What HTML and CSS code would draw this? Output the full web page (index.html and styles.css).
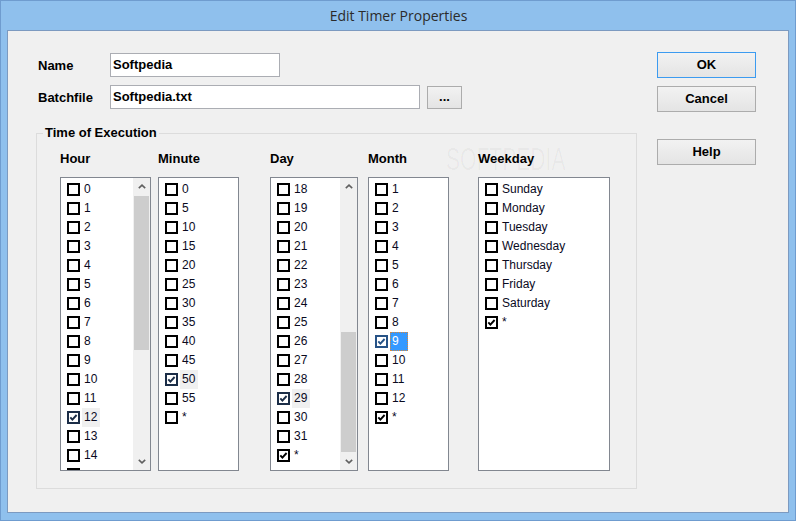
FILE: index.html
```html
<!DOCTYPE html>
<html>
<head>
<meta charset="utf-8">
<title>Edit Timer Properties</title>
<link rel="stylesheet" href="styles.css">
</head>
<body>
<div class="window">
  <div class="titlebar">Edit Timer Properties</div>
  <div class="client">
    <div class="watermark"><span class="wm-big">SOFTPEDIA</span><span class="wm-tm">™</span><span class="wm-url">www.softpedia.com</span></div>
    <div class="main">
      <div class="row">
        <label class="lbl">Name</label>
        <div class="input w-name">Softpedia</div>
      </div>
      <div class="row row-batch">
        <label class="lbl">Batchfile</label>
        <div class="input w-batch">Softpedia.txt</div>
        <div class="btn btn-browse">...</div>
      </div>
      <div class="group">
        <span class="legend">Time of Execution</span>
        <div class="cols">
          <div class="col col-hour">
            <div class="hdr">Hour</div>
            <div class="list">
              <div class="items">
                <div class="item"><span class="cb"></span><span class="txt">0</span></div>
                <div class="item"><span class="cb"></span><span class="txt">1</span></div>
                <div class="item"><span class="cb"></span><span class="txt">2</span></div>
                <div class="item"><span class="cb"></span><span class="txt">3</span></div>
                <div class="item"><span class="cb"></span><span class="txt">4</span></div>
                <div class="item"><span class="cb"></span><span class="txt">5</span></div>
                <div class="item"><span class="cb"></span><span class="txt">6</span></div>
                <div class="item"><span class="cb"></span><span class="txt">7</span></div>
                <div class="item"><span class="cb"></span><span class="txt">8</span></div>
                <div class="item"><span class="cb"></span><span class="txt">9</span></div>
                <div class="item"><span class="cb"></span><span class="txt">10</span></div>
                <div class="item"><span class="cb"></span><span class="txt">11</span></div>
                <div class="item"><span class="cb on navy"><svg viewBox="0 0 9 9"><path d="M1.3 4.3 L3.4 6.6 L7.6 2"/></svg></span><span class="txt hl">12</span></div>
                <div class="item"><span class="cb"></span><span class="txt">13</span></div>
                <div class="item"><span class="cb"></span><span class="txt">14</span></div>
                <div class="item"><span class="cb"></span></div>
              </div>
              <div class="sbar">
                <div class="sbtn"><svg viewBox="0 0 8 5"><path d="M0.8 4.2 L4 1.2 L7.2 4.2"/></svg></div>
                <div class="track"><div class="thumb thumb-hour"></div></div>
                <div class="sbtn"><svg viewBox="0 0 8 5"><path d="M0.8 0.8 L4 3.8 L7.2 0.8"/></svg></div>
              </div>
            </div>
          </div>
          <div class="col col-minute">
            <div class="hdr">Minute</div>
            <div class="list">
              <div class="items">
                <div class="item"><span class="cb"></span><span class="txt">0</span></div>
                <div class="item"><span class="cb"></span><span class="txt">5</span></div>
                <div class="item"><span class="cb"></span><span class="txt">10</span></div>
                <div class="item"><span class="cb"></span><span class="txt">15</span></div>
                <div class="item"><span class="cb"></span><span class="txt">20</span></div>
                <div class="item"><span class="cb"></span><span class="txt">25</span></div>
                <div class="item"><span class="cb"></span><span class="txt">30</span></div>
                <div class="item"><span class="cb"></span><span class="txt">35</span></div>
                <div class="item"><span class="cb"></span><span class="txt">40</span></div>
                <div class="item"><span class="cb"></span><span class="txt">45</span></div>
                <div class="item"><span class="cb on navy"><svg viewBox="0 0 9 9"><path d="M1.3 4.3 L3.4 6.6 L7.6 2"/></svg></span><span class="txt hl">50</span></div>
                <div class="item"><span class="cb"></span><span class="txt">55</span></div>
                <div class="item"><span class="cb"></span><span class="txt">*</span></div>
              </div>
            </div>
          </div>
          <div class="col col-day">
            <div class="hdr">Day</div>
            <div class="list">
              <div class="items">
                <div class="item"><span class="cb"></span><span class="txt">18</span></div>
                <div class="item"><span class="cb"></span><span class="txt">19</span></div>
                <div class="item"><span class="cb"></span><span class="txt">20</span></div>
                <div class="item"><span class="cb"></span><span class="txt">21</span></div>
                <div class="item"><span class="cb"></span><span class="txt">22</span></div>
                <div class="item"><span class="cb"></span><span class="txt">23</span></div>
                <div class="item"><span class="cb"></span><span class="txt">24</span></div>
                <div class="item"><span class="cb"></span><span class="txt">25</span></div>
                <div class="item"><span class="cb"></span><span class="txt">26</span></div>
                <div class="item"><span class="cb"></span><span class="txt">27</span></div>
                <div class="item"><span class="cb"></span><span class="txt">28</span></div>
                <div class="item"><span class="cb on navy"><svg viewBox="0 0 9 9"><path d="M1.3 4.3 L3.4 6.6 L7.6 2"/></svg></span><span class="txt hl">29</span></div>
                <div class="item"><span class="cb"></span><span class="txt">30</span></div>
                <div class="item"><span class="cb"></span><span class="txt">31</span></div>
                <div class="item"><span class="cb on"><svg viewBox="0 0 9 9"><path d="M1.3 4.3 L3.4 6.6 L7.6 2"/></svg></span><span class="txt">*</span></div>
              </div>
              <div class="sbar">
                <div class="sbtn"><svg viewBox="0 0 8 5"><path d="M0.8 4.2 L4 1.2 L7.2 4.2"/></svg></div>
                <div class="track"><div class="thumb thumb-day"></div></div>
                <div class="sbtn"><svg viewBox="0 0 8 5"><path d="M0.8 0.8 L4 3.8 L7.2 0.8"/></svg></div>
              </div>
            </div>
          </div>
          <div class="col col-month">
            <div class="hdr">Month</div>
            <div class="list">
              <div class="items">
                <div class="item"><span class="cb"></span><span class="txt">1</span></div>
                <div class="item"><span class="cb"></span><span class="txt">2</span></div>
                <div class="item"><span class="cb"></span><span class="txt">3</span></div>
                <div class="item"><span class="cb"></span><span class="txt">4</span></div>
                <div class="item"><span class="cb"></span><span class="txt">5</span></div>
                <div class="item"><span class="cb"></span><span class="txt">6</span></div>
                <div class="item"><span class="cb"></span><span class="txt">7</span></div>
                <div class="item"><span class="cb"></span><span class="txt">8</span></div>
                <div class="item"><span class="cb on blue"><svg viewBox="0 0 9 9"><path d="M1.3 4.3 L3.4 6.6 L7.6 2"/></svg></span><span class="txt sel">9</span></div>
                <div class="item"><span class="cb"></span><span class="txt">10</span></div>
                <div class="item"><span class="cb"></span><span class="txt">11</span></div>
                <div class="item"><span class="cb"></span><span class="txt">12</span></div>
                <div class="item"><span class="cb on"><svg viewBox="0 0 9 9"><path d="M1.3 4.3 L3.4 6.6 L7.6 2"/></svg></span><span class="txt">*</span></div>
              </div>
            </div>
          </div>
          <div class="col col-weekday">
            <div class="hdr">Weekday</div>
            <div class="list">
              <div class="items">
                <div class="item"><span class="cb"></span><span class="txt">Sunday</span></div>
                <div class="item"><span class="cb"></span><span class="txt">Monday</span></div>
                <div class="item"><span class="cb"></span><span class="txt">Tuesday</span></div>
                <div class="item"><span class="cb"></span><span class="txt">Wednesday</span></div>
                <div class="item"><span class="cb"></span><span class="txt">Thursday</span></div>
                <div class="item"><span class="cb"></span><span class="txt">Friday</span></div>
                <div class="item"><span class="cb"></span><span class="txt">Saturday</span></div>
                <div class="item"><span class="cb on"><svg viewBox="0 0 9 9"><path d="M1.3 4.3 L3.4 6.6 L7.6 2"/></svg></span><span class="txt">*</span></div>
              </div>
            </div>
          </div>
        </div>
      </div>
    </div>
    <div class="buttons">
      <div class="btn btn-main btn-default">OK</div>
      <div class="btn btn-main btn-cancel">Cancel</div>
      <div class="btn btn-main btn-help">Help</div>
    </div>
  </div>
</div>
</body>
</html>
```
FILE: styles.css
```css
* { box-sizing: border-box; }
html, body { margin: 0; padding: 0; }
body {
  width: 796px;
  height: 521px;
  overflow: hidden;
  font-family: "Liberation Sans", Arial, sans-serif;
  background: #8fc0ed;
}
.window {
  width: 796px;
  height: 521px;
  border: 1px solid #6f9ccf;
  background: #8fc0ed;
  padding: 0 6px 7px 6px;
  display: flex;
  flex-direction: column;
}
.titlebar {
  height: 29px;
  line-height: 29px;
  text-align: center;
  font-family: "Open Sans", "Noto Sans", sans-serif;
  font-size: 14px;
  color: #2b2b2b;
  padding-left: 1px;
}
.client {
  position: relative;
  height: 483px;
  border: 1px solid #7c9ac0;
  background: #f0f0f0;
  display: flex;
}
.main {
  margin-left: 28px;
  width: 601px;
  padding-top: 22px;
}
.row {
  display: flex;
  align-items: center;
  height: 24px;
}
.row-batch { margin-top: 8px; }
.lbl {
  width: 74px;
  padding-left: 2px;
  font-weight: bold;
  font-size: 13px;
  color: #000;
}
.input {
  height: 24px;
  border: 1px solid #abadb3;
  background: #fff;
  font-weight: bold;
  font-size: 13px;
  line-height: 22px;
  padding-left: 2px;
  color: #000;
}
.w-name { width: 170px; }
.w-batch { width: 310px; }
.btn {
  border: 1px solid #acacac;
  background: linear-gradient(#f2f2f2, #e4e4e4);
  font-weight: bold;
  font-size: 13px;
  color: #000;
  text-align: center;
}
.btn-browse {
  margin-left: 7px;
  width: 35px;
  height: 23px;
  line-height: 19px;
}
.group {
  position: relative;
  margin-top: 24px;
  width: 601px;
  height: 356px;
  border: 1px solid #dcdcdc;
  padding: 17px 0 0 23px;
}
.legend {
  position: absolute;
  top: -9px;
  left: 6px;
  padding: 0 2px;
  background: #f0f0f0;
  font-weight: bold;
  font-size: 13px;
  line-height: 16px;
  color: #000;
}
.cols { display: flex; }
.hdr {
  height: 16px;
  line-height: 16px;
  margin-bottom: 10px;
  font-weight: bold;
  font-size: 13px;
  color: #000;
}
.col-hour { width: 91px; }
.col-minute { width: 81px; margin-left: 7px; }
.col-day { width: 88px; margin-left: 31px; }
.col-month { width: 81px; margin-left: 10px; }
.col-weekday { width: 132px; margin-left: 29px; }
.list {
  height: 294px;
  border: 1px solid #828790;
  background: #fff;
  display: flex;
}
.items {
  flex: 1;
  padding-top: 2px;
  overflow: hidden;
}
.item {
  display: flex;
  align-items: center;
  height: 19px;
  padding-left: 6px;
  font-size: 12px;
  color: #0a0a1e;
  white-space: nowrap;
}
.cb {
  flex: none;
  width: 13px;
  height: 13px;
  border: 2px solid #000;
  background: #fff;
  display: flex;
}
.cb svg {
  width: 9px;
  height: 9px;
  fill: none;
  stroke: #000;
  stroke-width: 1.9;
}
.cb.navy { border-color: #1b2d47; }
.cb.navy svg { stroke: #1b2d47; }
.cb.blue { border-color: #265286; }
.cb.blue svg { stroke: #265286; }
.txt {
  margin-left: 2px;
  padding: 0 2px;
  height: 19px;
  line-height: 19px;
}
.txt.hl {
  min-width: 18px;
  background: #f0f0f0;
}
.txt.sel {
  min-width: 18px;
  background: #3399ff;
  color: #fff;
  border: 1px dotted #d8873a;
  line-height: 17px;
  padding: 0 1px;
}
.sbar {
  width: 17px;
  background: #f0f0f0;
  display: flex;
  flex-direction: column;
}
.sbtn {
  height: 17px;
  display: flex;
  align-items: center;
  justify-content: center;
}
.sbtn svg {
  width: 8px;
  height: 5px;
  fill: none;
  stroke: #606060;
  stroke-width: 1.6;
}
.track { flex: 1; padding: 0 1px; }
.thumb { background: #cdcdcd; }
.thumb-hour { margin-top: 1px; height: 154px; }
.thumb-day { margin-top: 137px; height: 120px; }
.buttons {
  margin-left: 20px;
  width: 99px;
  padding-top: 21px;
  display: flex;
  flex-direction: column;
}
.btn-main {
  height: 26px;
  line-height: 24px;
}
.btn-default { border-color: #3c9bf0; }
.btn-cancel { margin-top: 8px; }
.btn-help { margin-top: 27px; }
.watermark {
  position: absolute;
  left: 438px;
  top: 113px;
  width: 160px;
  height: 50px;
  pointer-events: none;
  color: rgba(0, 0, 0, 0.035);
}
.wm-big {
  position: absolute;
  left: 0;
  top: 0;
  font-family: "Liberation Sans", sans-serif;
  font-size: 31px;
  line-height: 32px;
  transform: scaleX(0.68);
  transform-origin: 0 0;
}
.wm-tm {
  position: absolute;
  left: 137px;
  top: 2px;
  font-size: 8px;
}
.wm-url {
  position: absolute;
  left: 30px;
  top: 34px;
  font-size: 11px;
  transform: scaleX(0.8);
  transform-origin: 0 0;
}
```
